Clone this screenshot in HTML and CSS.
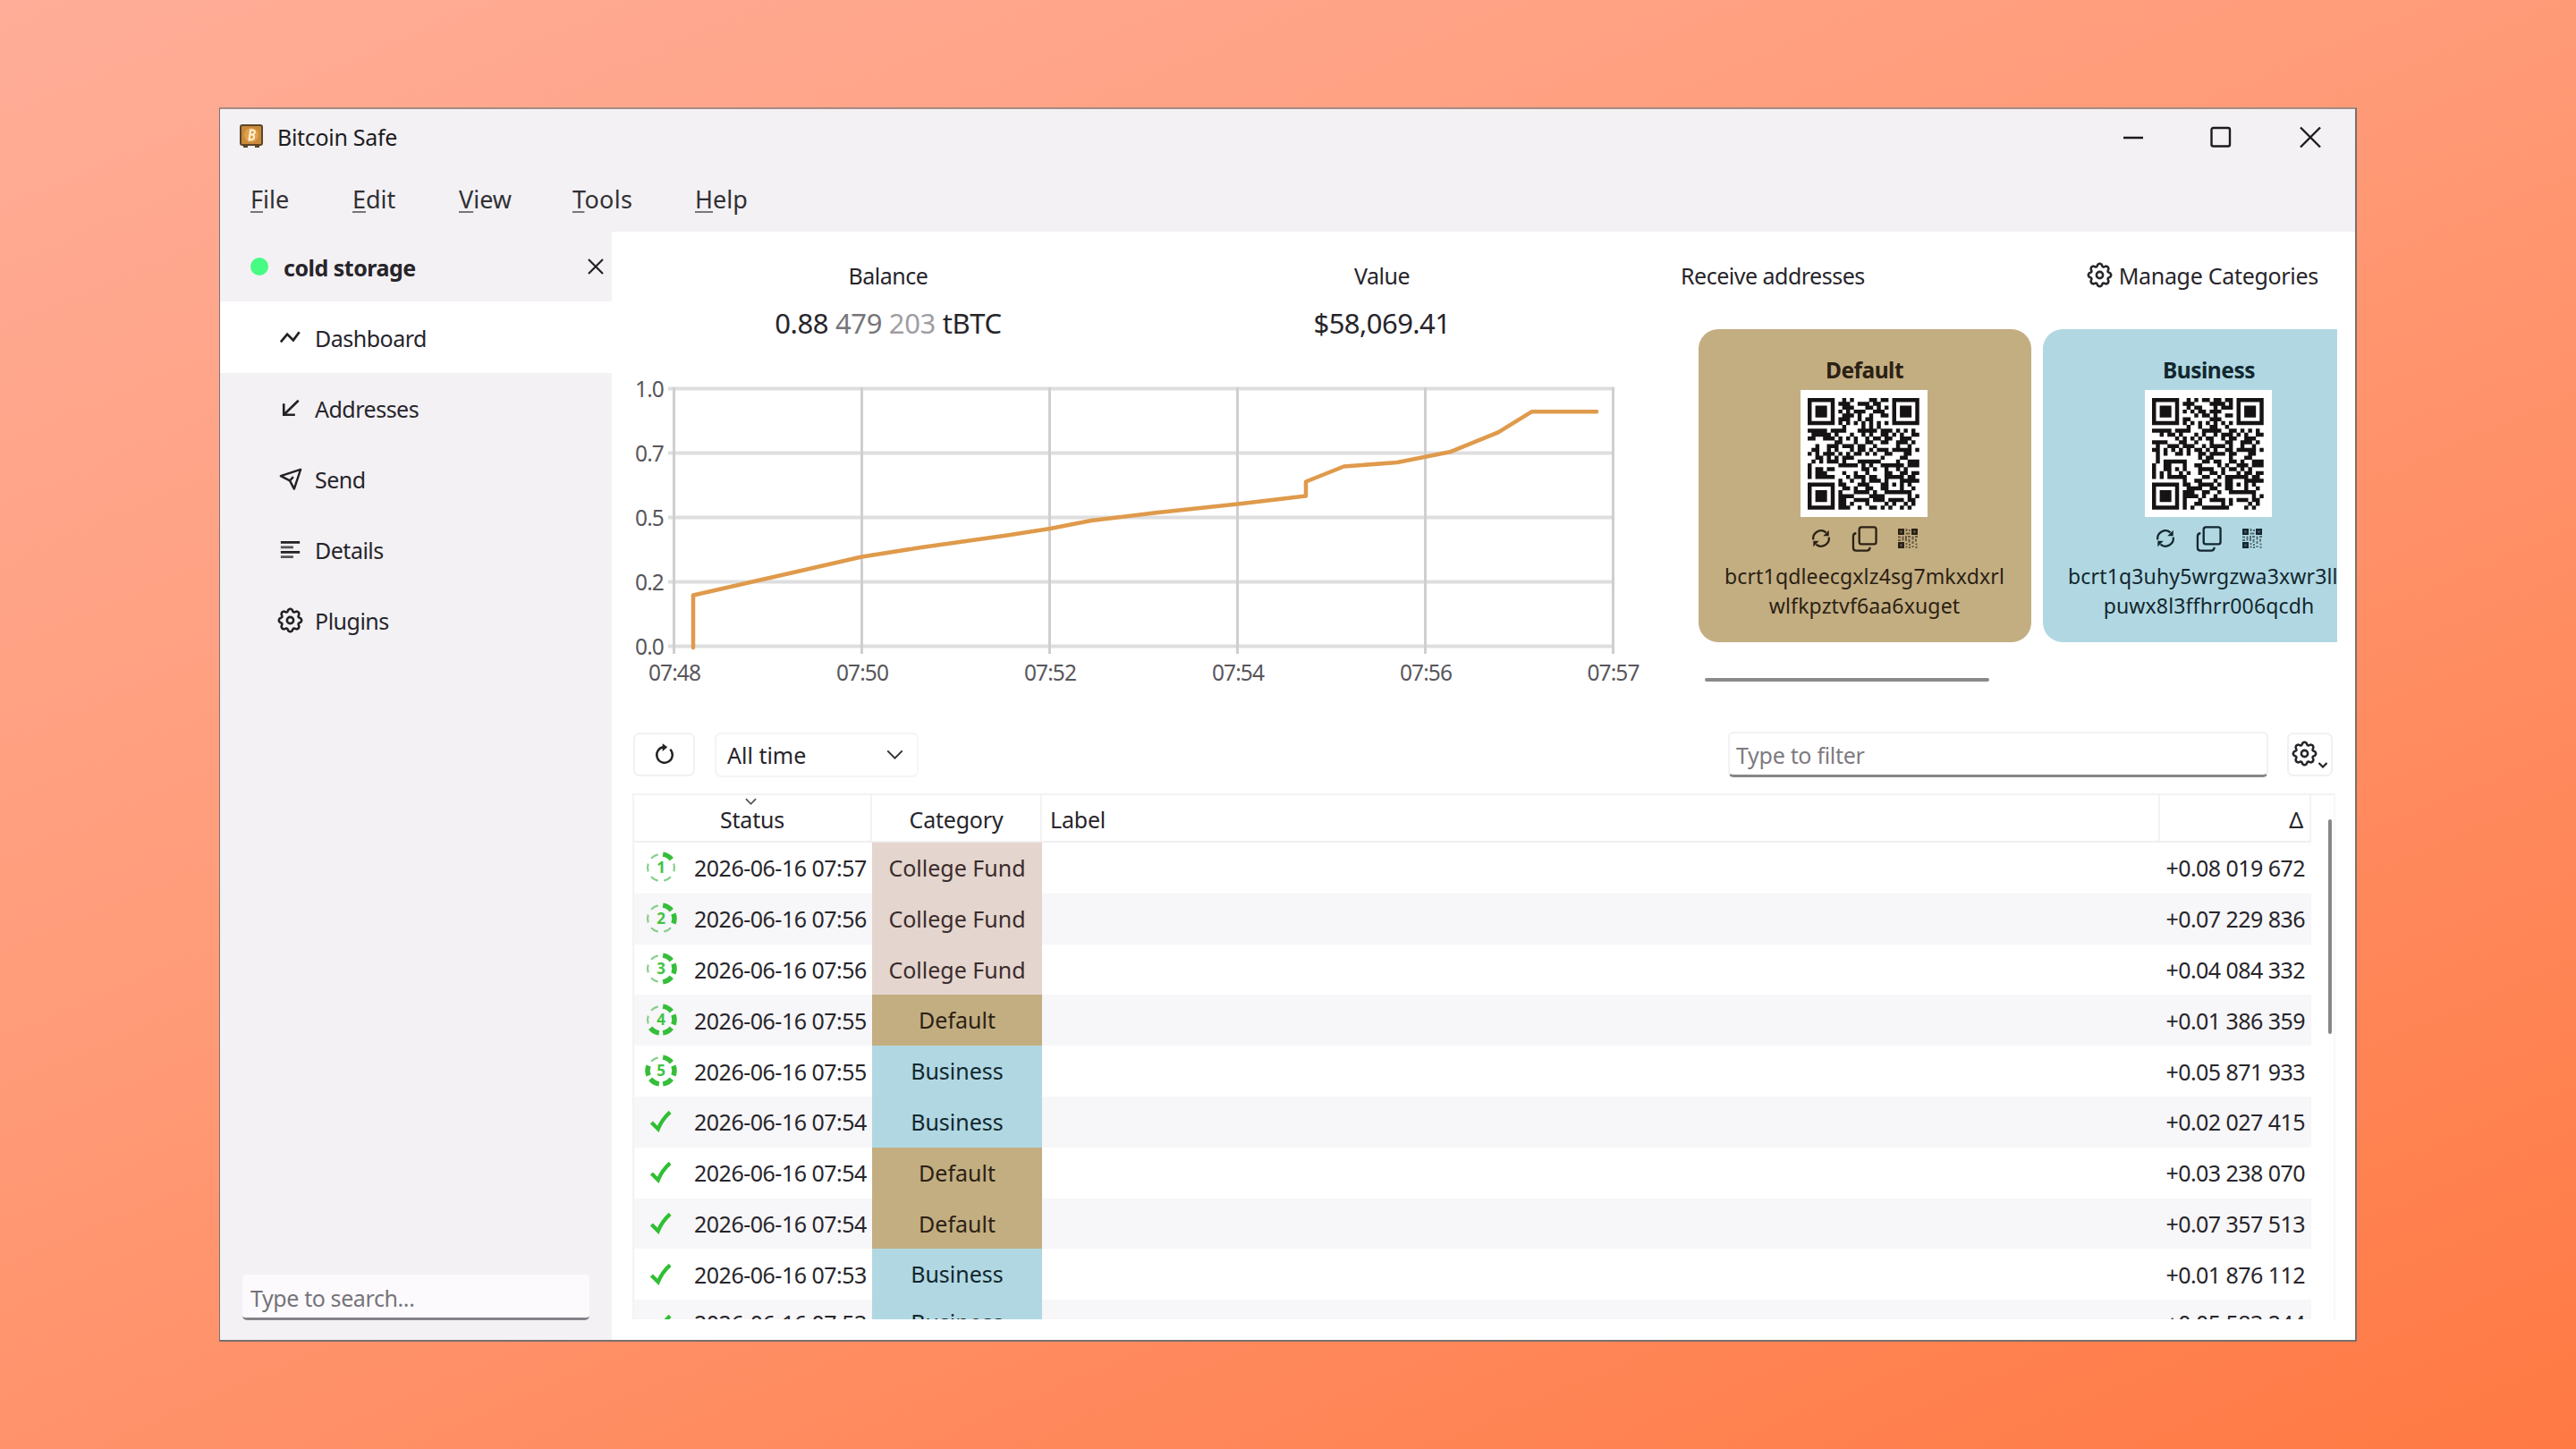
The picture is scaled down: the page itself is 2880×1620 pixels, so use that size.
FILE: index.html
```html
<!DOCTYPE html>
<html lang="en">
<head>
<meta charset="utf-8">
<title>Bitcoin Safe</title>
<link rel="stylesheet" href="styles.css">
</head>
<body>
<svg class="defs" width="0" height="0">
  <defs>
    <symbol id="gear" viewBox="0 0 24 24"><g fill="none" stroke="currentColor" stroke-width="2.100" stroke-linejoin="round"><path d="M10.3 2.2Q12 .8 13.7 2.2L14.6 4.1Q15 4.6 15.6 4.5L17.7 3.8Q20 4 20.200 6.300L19.500 8.400Q19.400 9 19.900 9.400L21.800 10.300Q23.200 12 21.800 13.700L19.900 14.600Q19.400 15 19.500 15.600L20.200 17.700Q20 20 17.700 20.200L15.600 19.500Q15 19.400 14.600 19.900L13.700 21.800Q12 23.200 10.300 21.800L9.400 19.900Q9 19.400 8.400 19.500L6.300 20.200Q4 20 3.800 17.700L4.500 15.600Q4.600 15 4.100 14.600L2.200 13.700Q.8 12 2.200 10.300L4.100 9.400Q4.600 9 4.500 8.400L3.800 6.300Q4 4 6.300 3.800L8.400 4.500Q9 4.600 9.400 4.100Z"/><circle cx="12" cy="12" r="3"/></g></symbol>
    <symbol id="sync" viewBox="0 0 24 24"><g fill="none" stroke="currentColor" stroke-width="2.500"><path d="M2.500 13.500A9.500 9.500 0 0 1 18 4.800"/><path d="M21.500 10.500A9.500 9.500 0 0 1 6 19.200"/></g><path fill="currentColor" d="M21.500 2V9H14.500ZM2.500 22V15H9.500Z"/></symbol>
    <symbol id="copy" viewBox="0 0 30 30"><g fill="none" stroke="currentColor" stroke-width="2.400"><rect x="9" y="1.500" width="19.500" height="19.500" rx="2.500"/><path d="M5.500 8.500Q2 8.500 2 12V25Q2 28.500 5.500 28.500H17.500Q21.300 28.500 21.300 24.500"/></g></symbol>
    <symbol id="miniqr" viewBox="0 0 22 22"><g fill="currentColor"><path d="M0 0h7v7H0zM15 0h7v7h-7zM0 15h7v7H0z"/><g opacity=".6"><path d="M8.500 0h2v3h-2zM12 1h2v2h-2zM8.500 4.500h5v2h-5zM0 8.500h3v2H0zM4.500 8.500h2v5h-2zM0 12h3v2H0zM8 8h2v6H8zM11 8h3v2h-3zM11.500 11.500h2v4h-2zM15.500 8.500h2v4h-2zM19 8h3v2h-3zM19 11.500h2v3h-2zM8.500 16h2v2h-2zM8.500 19.500h2v2h-2zM12 17h2v2h-2zM12 20h2v2h-2zM15.500 14h2v3h-2zM15.500 19h2v2h-2zM19.500 16.500h2v2h-2zM19.500 20h2v2h-2z"/></g></g><g fill="#fff" opacity=".35"><path d="M2.500 2.500h2v2h-2zM17.500 2.500h2v2h-2zM2.500 17.500h2v2h-2z"/></g></symbol>
    <symbol id="check" viewBox="0 0 26 26"><path fill="none" stroke="#2fbf33" stroke-width="4.600" d="M1.500 14.500L9.500 22.500Q14 11 24 2"/></symbol>
  </defs>
</svg>

<div class="window">
  <header class="titlebar">
    <svg class="app-icon" viewBox="0 0 26 26"><rect x="1" y="1" width="24" height="22" rx="2" fill="#c98a3c" stroke="#5d4428" stroke-width="2"/><path d="M4 23h5v3H4zM17 23h5v3h-5z" fill="#5d4428"/><circle cx="13" cy="12" r="8" fill="#e2a04a"/><g fill="none" stroke="#fff3d8" stroke-width="2"><path d="M10.500 17.500L12 6.500h2.500q3 .3 2.300 2.800-.7 2.200-3.300 2.200h-1.800h2q3 .5 2.300 3.200-.8 2.600-3.500 2.600z"/></g></svg>
    <span class="app-name">Bitcoin Safe</span>
    <svg class="controls" viewBox="0 0 230 30" fill="none" stroke="#1c1a1e" stroke-width="2.400"><path d="M4 16h22M202 4.500l22 22M224 4.500l-22 22"/><rect x="102.500" y="5" width="20.500" height="20.500" rx="2"/></svg>
  </header>
  <nav class="menubar">
    <span class="m-file"><u>F</u>ile</span><span class="m-edit"><u>E</u>dit</span><span class="m-view"><u>V</u>iew</span><span class="m-tools"><u>T</u>ools</span><span class="m-help"><u>H</u>elp</span>
  </nav>

  <div class="main">
    <aside class="sidebar">
      <div class="wallet"><i class="dot"></i><b>cold storage</b><svg class="close" viewBox="0 0 18 18"><path d="M1 1l16 16M17 1L1 17" stroke="#222" stroke-width="2.200"/></svg></div>
      <div class="nav active"><svg viewBox="0 0 30 30"><path d="M4 20L11.500 11 18.500 18 25.500 8.500" fill="none" stroke="currentColor" stroke-width="2.800"/></svg>Dashboard</div>
      <div class="nav"><svg viewBox="0 0 30 30"><path d="M24.500 6L7.500 22.500M7.500 9.500V22.500H20.500" fill="none" stroke="currentColor" stroke-width="2.700"/></svg>Addresses</div>
      <div class="nav"><svg viewBox="0 0 30 30"><path d="M4 11.500L27 4 19.500 26.500 14.500 17ZM14.500 17L18.500 12.500" fill="none" stroke="currentColor" stroke-width="2.500" stroke-linejoin="round"/></svg>Send</div>
      <div class="nav"><svg viewBox="0 0 30 30"><path d="M4 6.500H26M4 18H26" stroke="currentColor" stroke-width="2.800"/><path d="M4 12.300H18.500M4 23.300H18.500" stroke="#555" stroke-width="2.800"/></svg>Details</div>
      <div class="nav"><svg viewBox="0 0 24 24"><use href="#gear"/></svg>Plugins</div>
      <div class="search">Type to search...</div>
    </aside>

    <main class="content">
      <section class="top">
        <div class="overview">
          <div class="stats">
            <div class="stat"><h2>Balance</h2><p>0.88 <span class="mid">479</span> <span class="low">203</span> tBTC</p></div>
            <div class="stat"><h2>Value</h2><p class="usd">$58,069.41</p></div>
          </div>
          <svg class="chart" viewBox="684 400 1163 390">
            <g class="grid-h"><path d="M747 434.500H1805M747 506.500H1805M747 578.500H1805M747 650.500H1805M747 722.500H1805"/></g>
            <g class="grid-v"><path d="M753.500 433V731M963.500 433V731M1173.500 433V731M1383.500 433V731M1593.500 433V731M1803.500 433V731"/></g>
            <polyline class="line" points="775,724 775,665.500 887,640 963.500,622.500 1030,612 1126,598.500 1174,591 1220,582 1290,573.500 1384,563.500 1460,554.500 1460,538.500 1502.500,521.500 1562,517 1621,505.300 1675,483.300 1712.300,460.300 1785,460.300"/>
            <g class="ylab"><text x="742" y="444">1.0</text><text x="742" y="516">0.7</text><text x="742" y="588">0.5</text><text x="742" y="660">0.2</text><text x="742" y="732">0.0</text></g>
            <g class="xlab"><text x="754" y="761">07:48</text><text x="964" y="761">07:50</text><text x="1174" y="761">07:52</text><text x="1384" y="761">07:54</text><text x="1594" y="761">07:56</text><text x="1803.500" y="761">07:57</text></g>
          </svg>
        </div>
        <div class="receive">
          <div class="receive-head"><h2>Receive addresses</h2><span class="manage"><svg viewBox="0 0 24 24"><use href="#gear"/></svg>Manage Categories</span></div>
          <div class="cards">
            <article class="card default">
              <h3>Default</h3>
              <div class="qr" data-address="bcrt1qdleecgxlz4sg7mkxdxrlwlfkpztvf6aa6xuget"></div>
              <div class="actions"><svg class="i-sync"><use href="#sync"/></svg><svg class="i-copy"><use href="#copy"/></svg><svg class="i-qr"><use href="#miniqr"/></svg></div>
              <p class="addr">bcrt1qdleecgxlz4sg7mkxdxrl<br>wlfkpztvf6aa6xuget</p>
            </article>
            <article class="card business">
              <h3>Business</h3>
              <div class="qr" data-address="bcrt1q3uhy5wrgzwa3xwr3ll9puwx8l3ffhrr006qcdh"></div>
              <div class="actions"><svg class="i-sync"><use href="#sync"/></svg><svg class="i-copy"><use href="#copy"/></svg><svg class="i-qr"><use href="#miniqr"/></svg></div>
              <p class="addr">bcrt1q3uhy5wrgzwa3xwr3ll9<br>puwx8l3ffhrr006qcdh</p>
            </article>
          </div>
          <div class="hscroll"></div>
        </div>
      </section>

      <section class="toolbar">
        <div class="btn reload"><svg viewBox="0 0 24 24"><path d="M18.800 5.200A9.600 9.600 0 1 1 10.500 2.500" fill="none" stroke="#222" stroke-width="2.600"/><path d="M9.500 -2L15.500 2.500 9.500 7.500Z" fill="#222"/></svg></div>
        <div class="combo"><span>All time</span><svg viewBox="0 0 20 12"><path d="M1 1.500l9 9 9-9" fill="none" stroke="#333" stroke-width="2.200"/></svg></div>
        <div class="filter">Type to filter</div>
        <div class="btn settings"><svg class="g" viewBox="0 0 24 24"><use href="#gear"/></svg><svg class="v" viewBox="0 0 12 8"><path d="M1.500 1l4.500 4.500L10.500 1" fill="none" stroke="#222" stroke-width="2.200"/></svg></div>
      </section>

      <section class="table">
        <div class="thead">
          <div class="th status"><svg viewBox="0 0 14 8"><path d="M1 1l6 6 6-6" fill="none" stroke="#555" stroke-width="2"/></svg>Status</div>
          <div class="th">Category</div><div class="th label">Label</div><div class="th delta">Δ</div>
        </div>
        <div class="rows" id="rows"></div>
        <div class="vscroll"></div>
      </section>
    </main>
  </div>
</div>
<script src="app.js"></script>
</body>
</html>
```
FILE: styles.css
```css
* { box-sizing: border-box; margin: 0; padding: 0; }
body {
  width: 2880px; height: 1620px; overflow: hidden; display: flex;
  padding: 120px 0 0 245px;
  background: linear-gradient(157deg, #ffad98 0%, #ff9b78 42%, #ff8c61 68%, #ff7943 100%);
  font-family: "Noto Sans", "Open Sans", sans-serif; font-size: 25px; line-height: 34px;
  letter-spacing: -.5px; color: #27252b;
}
svg { display: block; overflow: visible; flex: none; }
.defs { position: absolute; }
h2, h3 { font-size: inherit; font-weight: 400; }

.window {
  width: 2390px; height: 1380px; display: flex; flex-direction: column;
  background: #f3f1f4; border: 2px solid #77706e; border-top-color: #a58a82; border-left: 1px solid #7c7472;
}
.titlebar { height: 65px; display: flex; align-items: center; padding: 0 33px 4px 22px; }
.app-icon { width: 26px; height: 26px; margin: -1px 16px 0 0; }
.app-name { flex: 1; letter-spacing: -.3px; color: #1d1c20; }
.controls { width: 230px; height: 30px; }
.menubar { height: 72px; display: flex; align-items: center; padding-left: 34px; font-size: 27px; letter-spacing: 0; color: #323035; }
.menubar u { text-decoration-color: #777; text-decoration-thickness: 2px; text-underline-offset: 3px; }
.m-file { width: 114px; } .m-edit { width: 119px; } .m-view { width: 127px; } .m-tools { width: 137px; letter-spacing: .3px; }

.main { flex: 1; min-height: 0; display: flex; }
.sidebar { width: 438px; display: flex; flex-direction: column; }
.wallet { height: 78px; display: flex; align-items: center; padding: 0 9px 0 34px; letter-spacing: -.5px; }
.wallet b { flex: 1; padding-top: 2px; }
.dot { width: 20px; height: 20px; border-radius: 50%; background: #48fb82; margin-right: 17px; }
.close { width: 18px; height: 18px; }
.nav { height: 79px; display: flex; align-items: center; gap: 13px; padding-left: 64px; }
.nav svg { width: 29px; height: 29px; color: #222; }
.nav.active { background: #fff; height: 80px; padding-top: 1px; }
.search { margin: auto 25px 22px 25px; height: 51px; padding: 9px 9px; background: #fcfafd; border-bottom: 3px solid #85828a; border-radius: 5px; color: #76747a; letter-spacing: -.4px; line-height: 34px; }

.content { width: 1949px; background: #fff; }
.top { height: 560px; display: flex; }
.overview { width: 1163px; }
.stats { height: 141px; padding: 32px 0 0 33px; display: grid; grid-template-columns: 552px 552px; text-align: center; }
.stat p { font-size: 31px; line-height: 40px; margin-top: 16px; letter-spacing: -.35px; }
.stat .usd { letter-spacing: -.55px; }
.mid { color: #77757a; } .low { color: #a09ea3; }
.chart { width: 1163px; height: 390px; }
.grid-h path { stroke: #dedede; stroke-width: 4; }
.grid-v path { stroke: #d0ced1; stroke-width: 3; }
.line { fill: none; stroke: #df9a4b; stroke-width: 4.500; stroke-linejoin: round; stroke-linecap: round; }
.chart text { font-size: 24.500px; fill: #58565b; letter-spacing: -.9px; }
.ylab { text-anchor: end; } .xlab { text-anchor: middle; }

.receive { width: 766px; padding-left: 52px; }
.receive-head { display: flex; justify-content: space-between; padding: 32px 21px 0 0; margin-left: -20px; }
.manage { display: flex; gap: 7px; align-items: center; letter-spacing: -.3px; }
.manage svg { width: 29px; height: 29px; margin-top: -2px; }
.cards { margin-top: 43px; display: flex; gap: 13px; overflow: hidden; }
.card { flex: none; width: 372px; height: 350px; border-radius: 22px; padding-top: 29px; display: flex; flex-direction: column; align-items: center; }
.default { background: #c3ae82; color: #2b2113; }
.business { background: #b1d8e2; color: #12272f; }
.card h3 { font-weight: 700; font-size: 24.500px; letter-spacing: -.5px; margin-right: 1px; }
.qr { width: 142px; height: 142px; margin: 5px 3px 0 0; padding: 8.700px; background: #fff; }
.qr svg { width: 124.600px; height: 124.600px; fill: #161314; }
.actions { height: 47px; display: flex; align-items: center; gap: 23px; padding: 1px 1px 0 0; }
.i-sync { width: 22px; height: 22px; } .i-copy { width: 29px; height: 29px; } .i-qr { width: 22px; height: 22px; }
.addr { margin: 3px 1px 0 0; font-size: 23px; line-height: 33px; text-align: center; white-space: nowrap; letter-spacing: .15px; }
.hscroll { width: 318px; height: 4px; margin: 40px 0 0 7px; border-radius: 2px; background: #8a8a8a; }

.toolbar { height: 49px; display: flex; align-items: center; padding: 0 25px 0 24px; margin-bottom: 19px; }
.btn { display: flex; border: 2px solid #f1f0f2; border-radius: 7px; height: 49px; }
.reload { width: 69px; align-items: center; justify-content: center; margin-right: 22px; }
.reload svg { width: 22px; height: 22px; }
.combo { width: 228px; height: 50px; border: 2px solid #f5f4f5; border-right-color: #f8f7f8; border-radius: 7px; display: flex; align-items: center; justify-content: space-between; padding: 1px 15px 0 12px; }
.combo span { letter-spacing: 0; }
.combo svg { width: 19px; height: 11px; margin-top: -2px; }
.filter { width: 604px; height: 51px; margin-left: auto; padding: 7px 7px; border: 2px solid #f3f2f3; border-bottom: 3px solid #87858a; border-radius: 6px; color: #7d7b80; letter-spacing: -.3px; }
.settings { width: 51px; margin-left: 21px; padding: 7px 0 0 3px; }
.settings .g { width: 29px; height: 29px; }
.settings .v { width: 12px; height: 8px; margin-top: 24px; }

.table { position: relative; width: 1904px; height: 588px; margin-left: 23px; border: 2px solid #f3f2f4; border-bottom: 0; border-right-color: #f8f7f8; overflow: hidden; }
.thead { width: 1875px; height: 53px; display: grid; grid-template-columns: 266px 190px 1250px 169px; border-bottom: 2px solid #f0eff1; }
.th { border-right: 2px solid #f3f2f4; text-align: center; padding-top: 10px; letter-spacing: -.2px; }
.label { text-align: left; padding-left: 9px; }
.delta { text-align: right; padding-right: 7px; font-size: 25px; }
.status svg { width: 13px; height: 8px; margin: -7px 0 -1px 124px; }
.row { width: 1875px; height: 56.800px; display: grid; grid-template-columns: 67px 199px 190px 1fr; align-items: center; }
.row:nth-child(even) { background: #f7f6f8; }
.row .badge { width: 36px; height: 36px; margin: -1px 0 0 12px; }
.row .check { width: 24px; height: 25px; margin: -1px 0 0 18px; }
.row .cat { height: 100%; text-align: center; padding-top: 11px; letter-spacing: 0; }
.row:last-child { line-height: 31px; }
.row:last-child > span { margin-bottom: 4px; }
.row:last-child .cat { margin: 0; padding-top: 10px; }
.row .cat.fund { background: #e4d5ce; color: #3a2c2c; }
.row .amount { text-align: right; padding-right: 7px; letter-spacing: -.55px; }
.badge text { font-size: 17px; font-weight: 700; fill: #3fc443; text-anchor: middle; letter-spacing: 0; }
.vscroll { position: absolute; right: 2px; top: 27px; width: 4px; height: 240px; border-radius: 2px; background: #88868a; }
```
FILE: app.js
```js
// QR code, version 3, level L, mask 2, byte mode
const N = 29, DATA = 55, ECC = 15;
const mul = (a, b) => {
  let r = 0;
  for (let i = 7; i >= 0; i--) { r = (r << 1) ^ ((r >> 7) * 0x11d); r ^= ((b >> i) & 1) * a; }
  return r;
};
function codewords(text) {
  const bits = [];
  const put = (v, n) => { for (let i = n - 1; i >= 0; i--) bits.push((v >> i) & 1); };
  put(4, 4); put(text.length, 8);
  for (const c of text) put(c.charCodeAt(0), 8);
  put(0, Math.min(4, DATA * 8 - bits.length));
  while (bits.length % 8) bits.push(0);
  for (let p = 0xec; bits.length < DATA * 8; p ^= 0xec ^ 0x11) put(p, 8);
  const data = [];
  for (let i = 0; i < bits.length; i += 8) data.push(parseInt(bits.slice(i, i + 8).join(''), 2));
  const gen = new Array(ECC).fill(0); gen[ECC - 1] = 1;
  let root = 1;
  for (let i = 0; i < ECC; i++) {
    for (let j = 0; j < ECC; j++) { gen[j] = mul(gen[j], root); if (j + 1 < ECC) gen[j] ^= gen[j + 1]; }
    root = mul(root, 2);
  }
  const rem = new Array(ECC).fill(0);
  for (const b of data) { const f = b ^ rem.shift(); rem.push(0); gen.forEach((g, i) => { rem[i] ^= mul(g, f); }); }
  return data.concat(rem);
}
function qr(text) {
  const m = Array.from({ length: N }, () => new Array(N).fill(0));
  const fixed = Array.from({ length: N }, () => new Array(N).fill(false));
  const set = (x, y, v) => { if (x >= 0 && y >= 0 && x < N && y < N) { m[y][x] = v ? 1 : 0; fixed[y][x] = true; } };
  for (let i = 0; i < N; i++) { set(6, i, i % 2 === 0); set(i, 6, i % 2 === 0); }
  for (const [cx, cy] of [[3, 3], [N - 4, 3], [3, N - 4]])
    for (let dy = -4; dy <= 4; dy++) for (let dx = -4; dx <= 4; dx++) {
      const d = Math.max(Math.abs(dx), Math.abs(dy)); set(cx + dx, cy + dy, d !== 2 && d !== 4);
    }
  for (let dy = -2; dy <= 2; dy++) for (let dx = -2; dx <= 2; dx++) set(22 + dx, 22 + dy, Math.max(Math.abs(dx), Math.abs(dy)) !== 1);
  const format = 0b111110110101010, b = i => (format >> i) & 1;
  for (let i = 0; i <= 5; i++) set(8, i, b(i));
  set(8, 7, b(6)); set(8, 8, b(7)); set(7, 8, b(8));
  for (let i = 9; i < 15; i++) set(14 - i, 8, b(i));
  for (let i = 0; i < 8; i++) set(N - 1 - i, 8, b(i));
  for (let i = 8; i < 15; i++) set(8, N - 15 + i, b(i));
  set(8, N - 8, 1);
  const cw = codewords(text);
  let k = 0;
  for (let right = N - 1; right >= 1; right -= 2) {
    if (right === 6) right = 5;
    for (let v = 0; v < N; v++) for (let j = 0; j < 2; j++) {
      const x = right - j, y = ((right + 1) & 2) === 0 ? N - 1 - v : v;
      if (fixed[y][x]) continue;
      const bit = k < cw.length * 8 ? (cw[k >> 3] >> (7 - (k & 7))) & 1 : 0;
      k++;
      m[y][x] = bit ^ (x % 3 === 0 ? 1 : 0);
    }
  }
  let d = '';
  m.forEach((r, y) => r.forEach((v, x) => { if (v) d += `M${x} ${y}h1.04v1.04h-1.04z`; }));
  return `<svg viewBox="0 0 29 29"><path d="${d}"/></svg>`;
}
document.querySelectorAll('.qr').forEach(el => { el.innerHTML = qr('bitcoin:' + el.dataset.address); });

// Confirmation badge: six arcs, the first n of them filled
function badge(n) {
  const pt = a => `${(18 + 15 * Math.sin(a)).toFixed(2)} ${(18 - 15 * Math.cos(a)).toFixed(2)}`;
  let s = '';
  for (let i = 0; i < 6; i++) {
    const mid = (i * 60 + 30) * Math.PI / 180, h = i < n ? .38 : .3;
    s += `<path d="M${pt(mid - h)}A15 15 0 0 1 ${pt(mid + h)}" fill="none" stroke="${i < n ? '#36be3a' : '#86cf8c'}" stroke-width="${i < n ? 5.500 : 2.200}"/>`;
  }
  return `<svg class="badge" viewBox="0 0 36 36">${s}<text x="18" y="24">${n}</text></svg>`;
}
const check = '<svg class="check"><use href="#check"/></svg>';
const names = { fund: 'College Fund', default: 'Default', business: 'Business' };
const data = [
  [1, '07:57', 'fund', '+0.08 019 672'], [2, '07:56', 'fund', '+0.07 229 836'],
  [3, '07:56', 'fund', '+0.04 084 332'], [4, '07:55', 'default', '+0.01 386 359'],
  [5, '07:55', 'business', '+0.05 871 933'], [6, '07:54', 'business', '+0.02 027 415'],
  [6, '07:54', 'default', '+0.03 238 070'], [6, '07:54', 'default', '+0.07 357 513'],
  [6, '07:53', 'business', '+0.01 876 112'], [6, '07:53', 'business', '+0.05 583 244'],
];
document.getElementById('rows').innerHTML = data.map(([n, t, c, v]) =>
  `<div class="row">${n < 6 ? badge(n) : check}<span>2026-06-16 ${t}</span><span class="cat ${c}">${names[c]}</span><span class="amount">${v}</span></div>`).join('');
```
